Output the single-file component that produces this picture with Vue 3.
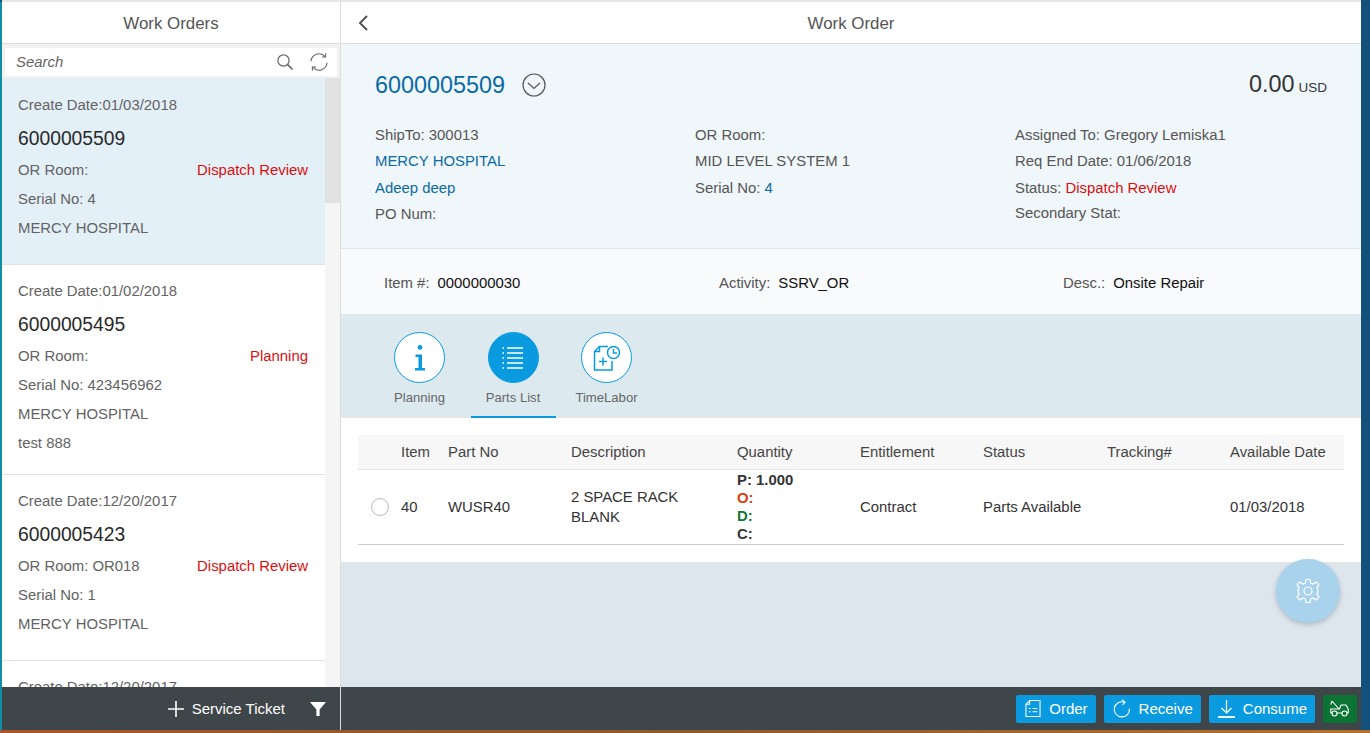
<template>
  <div class="page">
    <div class="shell">
      <div class="left">
        <div class="head">Work Orders</div>
        <div class="search-wrap">
          <div class="search">
            <span class="search-text">Search</span>
            <svg class="search-icon" width="18" height="18" viewBox="0 0 18 18" fill="none" stroke="#666" stroke-width="1.2">
              <circle cx="7.5" cy="7.5" r="5.6" />
              <path d="M11.6 11.6L16.5 16.5" stroke-width="1.6" />
            </svg>
            <svg width="20" height="20" viewBox="0 0 20 20" fill="none" stroke="#666" stroke-width="1.1">
              <path d="M2 9.2A8 8 0 0 1 16 4.6" />
              <path d="M16.6 1.2V5H12.9" />
              <path d="M18 10.8A8 8 0 0 1 4 15.4" />
              <path d="M3.4 18.8V15H7.1" />
            </svg>
          </div>
        </div>
        <div class="list-area">
          <div class="list">
            <div v-for="(o, i) in orders" :key="i" class="order" :class="{ selected: i === 0 }">
              <div class="line">Create Date:{{ o.date }}</div>
              <div class="num">{{ o.num }}</div>
              <div class="line between">
                <span>OR Room:{{ o.room }}</span>
                <span class="red">{{ o.status }}</span>
              </div>
              <div v-for="l in o.lines" :key="l" class="line">{{ l }}</div>
            </div>
          </div>
          <div class="track"><div class="thumb"></div></div>
        </div>
        <div class="foot left-foot">
          <svg width="16" height="16" viewBox="0 0 16 16" stroke="#fff" stroke-width="1.6"><path d="M8 0V16M0 8H16" /></svg>
          <span class="ticket">Service Ticket</span>
          <svg class="funnel" width="16" height="14" viewBox="0 0 16 14" fill="#fff"><path d="M0 0H16L9.6 7.5V14H6.4V7.5Z" /></svg>
        </div>
      </div>

      <div class="main">
        <div class="head back-head">
          <svg class="back" width="10" height="16" viewBox="0 0 10 16" fill="none" stroke="#555" stroke-width="2"><path d="M9 1L2 8L9 15" /></svg>
          Work Order
        </div>

        <div class="summary">
          <div class="title-row">
            <div class="title-left">
              <span class="title">6000005509</span>
              <svg width="24" height="24" viewBox="0 0 24 24" fill="none" stroke="#555" stroke-width="1.2">
                <circle cx="12" cy="12" r="11" />
                <path d="M6 10L12 15.5L18 10" />
              </svg>
            </div>
            <div class="amount">0.00<small>USD</small></div>
          </div>
          <div class="info">
            <div class="col">
              <div>ShipTo: 300013</div>
              <div class="blue">MERCY HOSPITAL</div>
              <div class="blue">Adeep deep</div>
              <div>PO Num:</div>
            </div>
            <div class="col">
              <div>OR Room:</div>
              <div>MID LEVEL SYSTEM 1</div>
              <div>Serial No: <span class="blue">4</span></div>
            </div>
            <div class="col">
              <div>Assigned To: Gregory Lemiska1</div>
              <div>Req End Date: 01/06/2018</div>
              <div>Status: <span class="red">Dispatch Review</span></div>
              <div class="tight">Secondary Stat:</div>
            </div>
          </div>
        </div>

        <div class="item-row">
          <div>Item #:<b>0000000030</b></div>
          <div>Activity:<b>SSRV_OR</b></div>
          <div>Desc.:<b>Onsite Repair</b></div>
        </div>

        <div class="tabs">
          <div class="tab">
            <div class="circle">
              <svg width="14" height="28" viewBox="0 0 14 28" fill="#0a9ae0">
                <circle cx="7" cy="3.4" r="2.4" />
                <path d="M2.5 10.5H9V24H12V26.5H2V24H5.5V13H2.5Z" />
              </svg>
            </div>
            <span>Planning</span>
          </div>
          <div class="tab active">
            <div class="circle">
              <svg width="22" height="24" viewBox="0 0 22 24" stroke="#fff" stroke-width="1.6">
                <path d="M5 2H21M5 7H21M5 12H21M5 17H21M5 22H21" />
                <path d="M0.5 2H2M0.5 7H2M0.5 12H2M0.5 17H2M0.5 22H2" />
              </svg>
            </div>
            <span>Parts List</span>
          </div>
          <div class="tab">
            <div class="circle">
              <svg width="28" height="28" viewBox="0 0 28 28" fill="none" stroke="#0a9ae0" stroke-width="1.5">
                <path d="M15 2.5H6.5L1.5 7.5V26H19V17" />
                <path d="M6.5 2.5V7.5H1.5" />
                <path d="M6 17.5H14M10 13.5V21.5" />
                <circle cx="20.5" cy="8.5" r="6" />
                <path d="M20.5 5V9H24" />
              </svg>
            </div>
            <span>TimeLabor</span>
          </div>
        </div>

        <div class="table-area">
          <div class="table">
            <div class="t-row t-head">
              <span></span>
              <span>Item</span>
              <span>Part No</span>
              <span>Description</span>
              <span>Quantity</span>
              <span>Entitlement</span>
              <span>Status</span>
              <span>Tracking#</span>
              <span>Available Date</span>
            </div>
            <div class="t-row t-body">
              <span class="radio"></span>
              <span>40</span>
              <span>WUSR40</span>
              <span class="desc">2 SPACE RACK BLANK</span>
              <span class="qty">
                <b>P: 1.000</b>
                <b class="orange">O:</b>
                <b class="green">D:</b>
                <b>C:</b>
              </span>
              <span>Contract</span>
              <span>Parts Available</span>
              <span></span>
              <span>01/03/2018</span>
            </div>
          </div>
        </div>

        <div class="empty">
          <div class="fab">
            <svg width="26" height="26" viewBox="0 0 26 26" fill="none" stroke="#fff" stroke-width="1.2" stroke-linejoin="round">
              <circle cx="13" cy="13" r="4" />
              <path d="M11 1.5H15L15.6 5L18.2 6.1L21.1 4L23.9 6.9L21.8 9.8L22.9 12V14L21.8 16.2L23.9 19.1L21.1 22L18.2 19.9L15.6 21L15 24.5H11L10.4 21L7.8 19.9L4.9 22L2.1 19.1L4.2 16.2L3.1 14V12L4.2 9.8L2.1 6.9L4.9 4L7.8 6.1L10.4 5Z" />
            </svg>
          </div>
        </div>

        <div class="foot main-foot">
          <button class="btn">
            <svg width="16" height="19" viewBox="0 0 17 19" fill="none" stroke="#fff" stroke-width="1.1">
              <path d="M5 1H16V18H1V5Z" />
              <path d="M5 1V5H1" />
              <path d="M4 9.5H6M8 9.5H13M4 13H6M8 13H13" />
            </svg>
            Order
          </button>
          <button class="btn">
            <svg width="18" height="19" viewBox="0 0 18 19" fill="none" stroke="#fff" stroke-width="1.1">
              <path d="M11.5 3.2A7.6 7.6 0 1 0 16.4 9.5" />
              <path d="M9 0.6L12 3.2L9.6 6" />
            </svg>
            Receive
          </button>
          <button class="btn">
            <svg width="17" height="18" viewBox="0 0 17 18" fill="none" stroke="#fff" stroke-width="1.2">
              <path d="M8.5 0V13M3.5 8L8.5 13L13.5 8" />
              <path d="M0 17H17" stroke-width="1.8" />
            </svg>
            Consume
          </button>
          <button class="btn tow">
            <svg width="19" height="17" viewBox="0 0 19 17" fill="none" stroke="#fff" stroke-width="1.1" stroke-linejoin="round">
              <circle cx="4.5" cy="13.5" r="2.5" />
              <circle cx="14.5" cy="13.5" r="2.5" />
              <path d="M2 13H0.8V9H9.5L11 5H16L18.2 9V13H17M7 13H12" />
              <path d="M2 1L9 9M2 1L0.8 4.5" />
            </svg>
          </button>
        </div>
      </div>
    </div>
    <div class="strip"></div>
  </div>
</template>

<script setup>
const orders = [
  { date: "01/03/2018", num: "6000005509", room: "", status: "Dispatch Review", lines: ["Serial No: 4", "MERCY HOSPITAL"] },
  { date: "01/02/2018", num: "6000005495", room: "", status: "Planning", lines: ["Serial No: 423456962", "MERCY HOSPITAL", "test 888"] },
  { date: "12/20/2017", num: "6000005423", room: " OR018", status: "Dispatch Review", lines: ["Serial No: 1", "MERCY HOSPITAL"] },
  { date: "12/20/2017", num: "6000005422", room: "", status: "Planning", lines: ["Serial No: 1"] },
];
</script>

<style>
html,
body {
  margin: 0;
  background: #fff;
}
</style>

<style scoped>
.page {
  width: 1370px;
  height: 733px;
  overflow: hidden;
  display: flex;
  flex-direction: column;
  font-family: "Liberation Sans", Arial, sans-serif;
  font-size: 14.9px;
  color: #555;
  background: #14507c;
}

.shell {
  flex: 1;
  min-height: 0;
  display: flex;
  margin: 2px 9px 0 2px;
  background: #fff;
  box-shadow: -2px 0 0 #0f8ea6, 0 -2px 0 #e6e6e6;
}

.strip {
  height: 3px;
  background: linear-gradient(90deg, #a8562a, #8a5a30 50%, #b5702e);
}

.left {
  width: 338px;
  flex: none;
  display: flex;
  flex-direction: column;
  border-right: 1px solid #dcdcdc;
}

.main {
  flex: 1;
  min-width: 0;
  display: flex;
  flex-direction: column;
}

.head {
  height: 42px;
  flex: none;
  border-bottom: 1px solid #ddd;
  box-sizing: border-box;
  padding-top: 2px;
  display: flex;
  align-items: center;
  justify-content: center;
  font-size: 16.9px;
  color: #555;
  background: #fff;
  position: relative;
}

.back {
  position: absolute;
  left: 17px;
  top: 13px;
}

.search-wrap {
  height: 34px;
  flex: none;
  box-sizing: border-box;
  padding: 4px 3px 0 3px;
  background: #f2f2f2;
}

.search {
  height: 28px;
  background: #fff;
  display: flex;
  align-items: center;
  gap: 15px;
  padding: 0 8px 0 11px;
}

.search-text {
  flex: 1;
  font-style: italic;
  color: #666;
}

.list-area {
  flex: 1;
  min-height: 0;
  display: flex;
  overflow: hidden;
}

.list {
  flex: 1;
  min-width: 0;
}

.track {
  width: 15px;
  flex: none;
  background: #f5f5f5;
}

.thumb {
  height: 125px;
  background: #e1e1e1;
}

.order {
  padding: 14px 17px 0 16px;
  height: 186px;
  box-sizing: border-box;
  background: #fff;
  border-bottom: 1px solid #dfe3e6;
}

.order:first-child {
  height: 187px;
  padding-top: 15px;
}

.order:nth-child(2) {
  height: 210px;
}

.order.selected {
  background: #e3f0f8;
}

.line {
  height: 29px;
  line-height: 24px;
  color: #636363;
}

.between {
  display: flex;
  justify-content: space-between;
}

.num {
  font-size: 19.3px;
  height: 36px;
  line-height: 34px;
  color: #2a2a2a;
}

.red {
  color: #d90f0f;
}

.blue {
  color: #0a6aa5;
}

.foot {
  height: 43px;
  flex: none;
  box-sizing: border-box;
  background: #3f4649;
  display: flex;
  align-items: center;
  color: #fff;
}

.left-foot {
  justify-content: flex-end;
  padding-right: 14px;
}

.ticket {
  font-size: 15px;
  margin: 0 25px 0 8px;
}

.funnel {
  margin-top: 1px;
}

.summary {
  height: 205px;
  flex: none;
  box-sizing: border-box;
  padding: 24px 34px 0;
  background: #f0f7fa;
  border-bottom: 1px solid #e2e6e9;
}

.title-row {
  display: flex;
  justify-content: space-between;
  align-items: center;
  height: 34px;
}

.title-left {
  display: flex;
  align-items: center;
  gap: 17px;
}

.title {
  font-size: 23.4px;
  color: #0a6aa5;
}

.amount {
  font-size: 23.4px;
  color: #333;
  display: flex;
  align-items: baseline;
  gap: 4px;
  margin-top: -2px;
}

.amount small {
  font-size: 13.5px;
}

.info {
  display: grid;
  grid-template-columns: 320px 320px 1fr;
  margin-top: 20px;
}

.col div {
  height: 26.4px;
  line-height: 27px;
  color: #555;
}

.col .blue {
  color: #0a6aa5;
}

.col .tight {
  line-height: 24px;
}

.item-row {
  height: 65px;
  flex: none;
  box-sizing: border-box;
  display: grid;
  grid-template-columns: 335px 344px 1fr;
  align-items: center;
  padding: 2px 0 0 43px;
  background: #f8fafb;
  color: #555;
}

.item-row b {
  font-weight: 400;
  color: #111;
  margin-left: 8px;
}

.tabs {
  height: 104px;
  flex: none;
  box-sizing: border-box;
  display: flex;
  padding-left: 36px;
  gap: 8.5px;
  background: #dceaf0;
  border-bottom: 2px solid #e4e6e7;
}

.tab {
  width: 85px;
  height: 104px;
  box-sizing: border-box;
  padding-top: 18px;
  display: flex;
  flex-direction: column;
  align-items: center;
  font-size: 13.1px;
  color: #666;
}

.tab.active {
  border-bottom: 2px solid #0a9ae0;
}

.circle {
  width: 51px;
  height: 51px;
  box-sizing: border-box;
  border-radius: 50%;
  border: 1px solid #0a9ae0;
  background: #fff;
  display: flex;
  align-items: center;
  justify-content: center;
  margin-bottom: 7px;
}

.active .circle {
  background: #0a9ae0;
}

.table-area {
  height: 144px;
  flex: none;
  box-sizing: border-box;
  padding: 17px 17px 0;
  background: #fff;
}

.t-row {
  display: grid;
  grid-template-columns: 43px 47px 123px 166px 123px 123px 124px 123px 1fr;
  align-items: center;
}

.t-head {
  height: 34px;
  background: #f7f7f7;
  border-bottom: 1px solid #e6e6e6;
  color: #444;
}

.t-body {
  height: 74px;
  border-bottom: 1px solid #ccc;
  color: #333;
}

.desc {
  max-width: 125px;
  line-height: 20px;
}

.radio {
  width: 16px;
  height: 16px;
  border-radius: 50%;
  border: 1px solid #bbb;
  background: #fff;
  margin-left: 13px;
}

.qty {
  display: flex;
  flex-direction: column;
  line-height: 18px;
  color: #333;
}

.orange {
  color: #d8400e;
}

.green {
  color: #0c7a34;
}

.empty {
  flex: 1;
  min-height: 0;
  background: #dde6ed;
  position: relative;
  border-top: 1px solid #e4e6e7;
}

.fab {
  position: absolute;
  right: 21px;
  top: -4px;
  width: 64px;
  height: 64px;
  border-radius: 50%;
  background: #a9d2ec;
  box-shadow: 0 2px 5px rgba(0, 0, 0, 0.2);
  display: flex;
  align-items: center;
  justify-content: center;
}

.main-foot {
  justify-content: flex-end;
  gap: 8px;
  padding-right: 4px;
}

.btn {
  height: 28px;
  border: 0;
  border-radius: 2px;
  background: #0a9ae0;
  color: #fff;
  font: inherit;
  font-size: 15px;
  display: flex;
  align-items: center;
  gap: 8px;
  padding: 0 8px 0 9px;
}

.btn.tow {
  background: #0b7334;
  padding: 0 8px 0 7px;
}
</style>
